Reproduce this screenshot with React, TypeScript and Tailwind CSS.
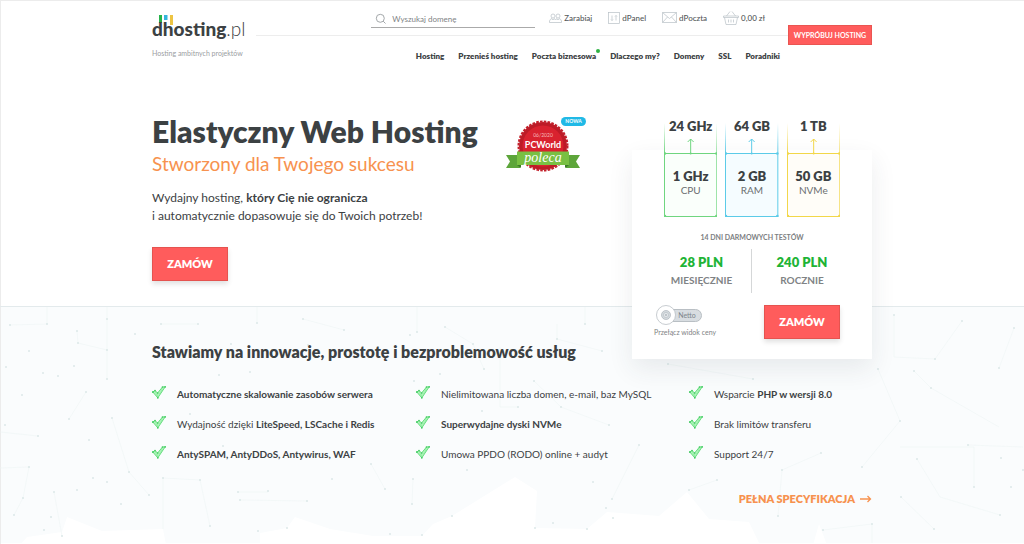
import type { ReactNode } from 'react';

const NAV = ['Hosting', 'Przenieś hosting', 'Poczta biznesowa', 'Dlaczego my?', 'Domeny', 'SSL', 'Poradniki'];

const RESOURCES = [
  { max: '24 GHz', min: '1 GHz', label: 'CPU', color: '#6fd67f', fill: '#fafffb' },
  { max: '64 GB', min: '2 GB', label: 'RAM', color: '#5ccbe8', fill: '#f5fcff' },
  { max: '1 TB', min: '50 GB', label: 'NVMe', color: '#f2d749', fill: '#fffdf8' },
];

const FEATURES: ReactNode[] = [
  <b>Automatyczne skalowanie zasobów serwera</b>,
  'Nielimitowana liczba domen, e-mail, baz MySQL',
  <>Wsparcie <b>PHP w wersji 8.0</b></>,
  <>Wydajność dzięki <b>LiteSpeed, LSCache i Redis</b></>,
  <b>Superwydajne dyski NVMe</b>,
  'Brak limitów transferu',
  <b>AntySPAM, AntyDDoS, Antywirus, WAF</b>,
  'Umowa PPDO (RODO) online + audyt',
  'Support 24/7',
];

// Background mesh: node positions and the faint links between them
const DOTS = [
  [10, 18], [47, 17], [107, 12], [135, 27], [77, 24], [78, 36], [29, 44], [107, 43], [6, 60], [43, 66], [58, 69], [74, 59],
  [107, 72], [22, 88], [86, 85], [69, 112], [5, 118], [38, 129], [89, 133], [112, 111], [29, 160], [93, 171], [107, 175],
  [54, 185], [77, 183], [23, 191], [121, 197], [51, 210], [14, 208], [62, 229], [129, 165], [149, 188], [44, 223],
  [161, 17], [198, 17], [257, 16], [303, 12], [344, 23], [231, 37], [308, 38], [250, 65], [219, 68], [190, 107], [223, 139],
  [200, 173], [163, 171], [238, 185], [268, 184], [240, 193], [210, 219], [258, 224], [287, 221], [307, 194], [332, 172],
  [413, 172], [412, 197], [385, 182], [371, 157], [445, 20], [417, 25], [410, 28], [473, 37], [484, 62], [440, 67],
  [414, 74], [482, 104], [467, 163], [452, 209], [422, 228], [390, 227], [518, 100], [585, 17], [557, 32], [602, 44],
  [534, 74], [561, 100], [609, 118], [639, 138], [593, 175], [612, 192], [689, 183], [717, 173], [606, 201], [613, 211],
  [553, 216], [587, 222], [535, 221], [668, 57], [753, 72], [878, 62], [894, 8], [962, 14], [1014, 21], [900, 114],
  [914, 64], [935, 52], [999, 61], [862, 160], [917, 152], [821, 146], [931, 81], [1001, 151], [974, 180], [901, 190],
  [872, 217], [1000, 208], [934, 222], [823, 223], [778, 209], [1011, 180], [968, 138], [1023, 163], [782, 163], [870, 20],
];

const LINKS = [
  'M10 18L47 17V0M107 0V72M77 24L78 36L107 43M0 125L38 129M69 112L86 85M112 111L129 165L149 188',
  'M0 161L29 160L23 191L14 208M54 185L62 229M163 171V222M163 171L200 173L210 219M238 185H268M240 193L307 194',
  'M161 17L198 17M257 16V0M303 12L344 23M417 25V0M445 20L473 37L484 62M371 157L385 182M413 172L412 197',
  'M534 74L561 100L609 118M585 17V0M557 17L557 32L602 44M639 138L612 192M668 57L753 72M689 183L717 173',
  'M894 8V50L935 52L962 14M914 64L931 81L999 120M878 62L900 114L862 160M900 140H974V180M917 152L940 190L1000 208',
  'M821 146L782 163L778 209M823 223L872 217V238M901 190L934 222M968 138L1023 140M999 61L1014 21M500 40V100L518 100',
];

function Backdrop() {
  return (
    <svg
      aria-hidden="true"
      viewBox="0 0 1024 238"
      preserveAspectRatio="xMidYMin slice"
      className="absolute inset-0 h-full w-full"
    >
      <path
        fill="#fff"
        d="M20 238L27 230L62 225L67 210L102 224L163 222L166 238ZM260 238V226L287 221L295 210L330 222L373 229L422 229L433 217L452 209L515 170L537 184L535 221L587 222L607 205L659 209L687 185L709 212L749 215L760 238ZM813 238L819 217L827 238Z"
      />
      <g stroke="#eef5f5" strokeWidth="0.6" fill="none">
        {LINKS.map((d) => (
          <path key={d} d={d} />
        ))}
      </g>
      <g fill="#dde9e9">
        {DOTS.map(([x, y]) => (
          <circle key={`${x}-${y}`} cx={x} cy={y} r="1" />
        ))}
      </g>
    </svg>
  );
}

function Logo() {
  return (
    <a href="#" aria-label="dhosting.pl" className="block h-8 w-25">
      <svg viewBox="0 0 100 32" className="h-8 w-25">
        <rect x="7" y="2" width="3" height="8" fill="#27b34a" />
        <rect x="12" y="2" width="3.500" height="5" fill="#35b5dc" />
        <rect x="18" y="2" width="3" height="10" fill="#edc443" />
        <text x="0" y="23" fontSize="19" fill="#3c4143">
          <tspan fontWeight="900">dhosting</tspan>
          <tspan fontWeight="300">.pl</tspan>
        </text>
      </svg>
    </a>
  );
}

function PeopleIcon() {
  return (
    <svg viewBox="0 0 13 10" className="h-[10px] w-[13px]" fill="none" stroke="#b8c0c6" strokeWidth="0.7">
      <circle cx="4" cy="3" r="2" />
      <circle cx="9" cy="3" r="2" />
      <path d="M.5 9.5V8Q1 6 3 5.5L4 7L5 5.5Q6.200 6 6.500 7Q7 6 8 5.500L9 7L10 5.500Q12 6 12.500 8V9.500Z" />
    </svg>
  );
}

function PanelIcon() {
  return (
    <svg viewBox="0 0 12 12" className="h-3 w-3" fill="none" stroke="#b8c0c6" strokeWidth="0.7">
      <rect x=".5" y=".5" width="11" height="11" />
      <path d="M4 3.500V8.500M3 7.500L4 8.500L5 7.500M8 8.500V3.500M7 4.500L8 3.500L9 4.500" />
    </svg>
  );
}

function MailIcon() {
  return (
    <svg viewBox="0 0 15 11" className="h-[11px] w-[15px]" fill="none" stroke="#b8c0c6" strokeWidth="0.7">
      <path d="M.5.500H14.500V10.500H.5ZM.5.500L7.500 6.500L14.500.500M.5 10.500L5.500 5M14.500 10.500L9.500 5" />
    </svg>
  );
}

function BasketIcon() {
  return (
    <svg viewBox="0 0 16 14" className="h-[14px] w-4" fill="none" stroke="#b8c0c6" strokeWidth="0.7">
      <path d="M.5 5H15.500V6.500H.5ZM1.500 6.500L3 13.500H13L14.500 6.500M3.500 5L7 .5M12.500 5L9 .5M5.500 8.500V11.500M8 8.500V11.500M10.500 8.500V11.500" />
    </svg>
  );
}

function CheckIcon() {
  return (
    <svg viewBox="0 0 14 13" className="mt-px h-[13px] w-[14px] shrink-0">
      <path d="M.8 6L3 4.600L5.600 7L10.500 1L13.200.8L5.800 11.800Z" fill="#b4f5be" stroke="#62dd7c" strokeWidth="1" />
      <path d="M3 4.600L5.800 11.800L5.600 7L8.500 7.600L10.500 1" fill="none" stroke="#7ce592" strokeWidth="0.5" />
      <g fill="#3ec95e">
        <circle cx=".9" cy="6" r=".9" />
        <circle cx="3" cy="4.600" r=".8" />
        <circle cx="5.600" cy="7" r=".7" />
        <circle cx="10.500" cy="1" r=".8" />
        <circle cx="13.200" cy=".9" r=".8" />
        <circle cx="5.800" cy="11.800" r=".9" />
      </g>
    </svg>
  );
}

function AwardBadge() {
  return (
    <div className="relative h-14 w-20 shrink-0">
      <svg viewBox="0 0 80 56" className="h-14 w-20">
        <circle cx="37" cy="29" r="24.500" fill="none" stroke="#c3202b" strokeWidth="2" strokeDasharray="2.600 1.250" />
        <circle cx="37" cy="29" r="24" fill="#bd1b27" />
        <circle cx="37" cy="29" r="20.500" fill="#d9222f" />
        <path d="M0 38H14V51H0L4 44.500Z" fill="#5da53a" />
        <path d="M60 38H74L70 44.500L74 51H60Z" fill="#5da53a" />
        <path d="M11 34.500H63V48H11Z" fill="#79c043" />
        <path d="M11 48H15V51ZM63 48H59V51Z" fill="#3c7a28" />
        <text x="37" y="20" textAnchor="middle" fontSize="5" fill="#f7b9bc">06/2020</text>
        <text x="37" y="31" textAnchor="middle" fontSize="9" fontWeight="700" fill="#fff">PCWorld</text>
        <text x="37" y="45" textAnchor="middle" fontSize="14" fontStyle="italic" fontFamily="Liberation Serif, serif" fill="#fff">
          poleca
        </text>
      </svg>
      <span className="absolute top-0 right-0 flex h-[9px] w-[25px] items-center justify-center rounded-full bg-[#20b9e6] text-[5px] font-bold text-white">
        NOWA
      </span>
    </div>
  );
}

function ResourceTower({ max, min, label, color, fill }: (typeof RESOURCES)[number]) {
  const fade = `fade-${label}`;
  return (
    <li className="relative h-[100px] flex-1 text-center">
      <svg viewBox="0 0 54 100" preserveAspectRatio="none" className="absolute inset-0 h-full w-full">
        <defs>
          <linearGradient id={fade} x1="0" y1="0" x2="0" y2="1">
            <stop offset="0" stopColor={color} stopOpacity="0" />
            <stop offset="1" stopColor={color} />
          </linearGradient>
        </defs>
        <rect x="0" y="6" width="1" height="30" fill={`url(#${fade})`} />
        <rect x="53" y="6" width="1" height="30" fill={`url(#${fade})`} />
        <rect x=".5" y="36.500" width="53" height="63" fill={fill} stroke={color} />
        <path d="M27 36V22M24 25L27 22L30 25" fill="none" stroke={color} />
        <g fill={color}>
          <circle cx="1" cy="36.500" r="1.300" />
          <circle cx="53" cy="36.500" r="1.300" />
          <circle cx="1" cy="99" r="1.300" />
          <circle cx="53" cy="99" r="1.300" />
          <circle cx="27" cy="36.500" r="1" />
        </g>
      </svg>
      <div className="relative whitespace-nowrap">
        <p className="text-[13px] leading-[18px] font-extrabold">{max}</p>
        <p className="mt-8 text-[13px] leading-[18px] font-extrabold">{min}</p>
        <p className="text-[10px] leading-[10px] text-[#6b6e70]">{label}</p>
      </div>
    </li>
  );
}

function PriceCard() {
  return (
    <div className="relative z-10 mt-[37px] -mb-[53px] w-60 shrink-0 bg-white px-8 pb-5 shadow-[0_10px_24px_rgba(40,60,70,0.09)]">
      <ul className="-mt-[33px] flex gap-2">
        {RESOURCES.map((resource) => (
          <ResourceTower key={resource.label} {...resource} />
        ))}
      </ul>
      <p className="mt-[14px] text-center text-[7px] leading-[12px] font-bold text-[#7d8082]">14 DNI DARMOWYCH TESTÓW</p>

      {/* Prices */}
      <dl className="mt-[6px] grid grid-cols-2 divide-x divide-[#d5d7d8] text-center font-extrabold">
        <div className="flex h-11 flex-col-reverse justify-center pr-3">
          <dt className="text-[10px] leading-[18px] font-bold text-[#808385]">MIESIĘCZNIE</dt>
          <dd className="text-[13px] leading-[18px] text-[#1eb436]">28 PLN</dd>
        </div>
        <div className="flex h-11 flex-col-reverse justify-center pl-3">
          <dt className="text-[10px] leading-[18px] font-bold text-[#808385]">ROCZNIE</dt>
          <dd className="text-[13px] leading-[18px] text-[#1eb436]">240 PLN</dd>
        </div>
      </dl>

      <div className="mt-3 -ml-[10px] flex items-start justify-between">
        <label className="block cursor-pointer text-[7px] text-[#808385]">
          <input type="checkbox" role="switch" className="peer sr-only" />
          <span className="ml-[2px] flex h-5 items-center">
            <svg viewBox="0 0 20 20" className="relative h-5 w-5">
              <circle cx="10" cy="10" r="9.500" fill="#fff" stroke="#b9bfc4" strokeWidth="0.8" />
              <circle cx="10" cy="10" r="4.500" fill="#d5dbdf" stroke="#adb5bb" strokeWidth="0.700" />
              <circle cx="10" cy="10" r="2.600" fill="#e3e7ea" stroke="#adb5bb" strokeWidth="0.500" />
              <circle cx="10" cy="10" r=".8" fill="#8f989f" />
            </svg>
            <span className="-ml-1 flex h-[13px] w-[30px] items-center justify-center rounded-r-full border border-[#b9bfc4] bg-[#d8dde1] text-[#7e868c]">
              Netto
            </span>
          </span>
          <span className="mt-[2px] block leading-[10px]">Przełącz widok ceny</span>
        </label>
        <OrderButton />
      </div>
    </div>
  );
}

function OrderButton() {
  return (
    <button
      type="button"
      className="h-[34px] w-[76px] border border-[#e5534f] bg-[#ff5c5c] text-[11px] font-extrabold text-white shadow-[0_3px_5px_rgba(0,0,0,0.12)]"
    >
      ZAMÓW
    </button>
  );
}

function Header() {
  return (
    <header className="mx-auto flex max-w-[720px] items-start">
      <div className="w-26 shrink-0 pt-3">
        <Logo />
        <p className="mt-[3px] text-[7px] leading-[10px] whitespace-nowrap text-[#9a9d9f]">Hosting ambitnych projektów</p>
      </div>
      <div className="flex-1">
        <div className="flex h-[35px] items-start justify-end border-b border-[#ededed] pr-[23px]">
          <label className="mt-[9px] mr-[14px] flex h-[18px] w-41 items-center border-b border-[#aaa] pl-1">
            <svg viewBox="0 0 12 12" className="h-3 w-3 shrink-0" fill="none" stroke="#999da0" strokeWidth="0.9">
              <circle cx="5.300" cy="5.300" r="4" />
              <path d="M8.200 8.200L10.500 10.500" />
            </svg>
            <input
              type="search"
              aria-label="Wyszukaj domenę"
              placeholder="Wyszukaj domenę"
              className="ml-[5px] w-full min-w-0 text-[8px] outline-none placeholder:text-[#808385]"
            />
          </label>
          <div className="flex h-[33px] items-center gap-4 text-[8px] font-medium whitespace-nowrap text-[#55595b]">
            <a href="#" className="flex items-center gap-[2px]"><PeopleIcon />Zarabiaj</a>
            <a href="#" className="flex items-center gap-[2px]"><PanelIcon />dPanel</a>
            <a href="#" className="flex items-center gap-[2px]"><MailIcon />dPoczta</a>
            <a href="#" className="flex items-center gap-[2px]"><BasketIcon />0,00 zł</a>
          </div>
        </div>
        <nav className="flex h-10 items-center justify-end gap-[14px] pr-2 text-[8px] font-extrabold whitespace-nowrap">
          {NAV.map((item) => (
            <a key={item} href="#" className="relative">
              {item}
              {item === 'Poczta biznesowa' && (
                <span className="absolute -top-[1px] -right-1 h-1 w-1 rounded-full bg-[#2fb344]" />
              )}
            </a>
          ))}
        </nav>
      </div>
      <button
        type="button"
        className="mt-6 h-5 w-[84px] shrink-0 border border-[#ea5551] bg-[#ff5c5c] text-[7px] font-bold whitespace-nowrap text-white"
      >
        WYPRÓBUJ HOSTING
      </button>
    </header>
  );
}

export default function App() {
  return (
    <div className="min-h-screen border-t border-[#ececec] bg-white font-[Lato,sans-serif] text-[#3c4143] shadow-[inset_1px_0_#ececec]">
      <Header />

      {/* Hero */}
      <section className="mx-auto flex max-w-[720px] items-start pt-[37px]">
        <div className="flex-1">
          <h1 className="text-[30px] leading-9 font-extrabold whitespace-nowrap">Elastyczny Web Hosting</h1>
          <p className="text-[19px] leading-[30px] text-[#f7924f]">Stworzony dla Twojego sukcesu</p>
          <p className="mt-[10px] text-[12px] leading-[18px]">
            Wydajny hosting, <b>który Cię nie ogranicza</b>
            <br />i automatycznie dopasowuje się do Twoich potrzeb!
          </p>
          <div className="mt-[22px]">
            <OrderButton />
          </div>
        </div>
        <div className="mt-1 mr-[46px]">
          <AwardBadge />
        </div>
        <PriceCard />
      </section>

      {/* Features */}
      <section className="relative border-t border-[#e3eaec] bg-[#fafcfd] shadow-[inset_1px_0_#ececec]">
        <Backdrop />
        <div className="relative mx-auto max-w-[720px] pt-[35px] pb-9">
          <h2 className="text-[16px] leading-5 font-extrabold">Stawiamy na innowacje, prostotę i bezproblemowość usług</h2>
          <ul className="mt-[23px] grid grid-cols-[264fr_273fr_183fr] gap-y-[12px] text-[10px] leading-[18px] whitespace-nowrap">
            {FEATURES.map((feature, i) => (
              <li key={i} className="flex gap-[11px]">
                <CheckIcon />
                <span>{feature}</span>
              </li>
            ))}
          </ul>
          <a href="#" className="mt-7 flex items-center justify-end gap-[5px] text-[11px] leading-4 font-extrabold text-[#f7924f]">
            PEŁNA SPECYFIKACJA
            <svg viewBox="0 0 12 8" className="h-2 w-3" fill="none" stroke="currentColor" strokeWidth="1.300">
              <path d="M0 4H10.500M7.500 1L10.500 4L7.500 7" />
            </svg>
          </a>
        </div>
      </section>
    </div>
  );
}
